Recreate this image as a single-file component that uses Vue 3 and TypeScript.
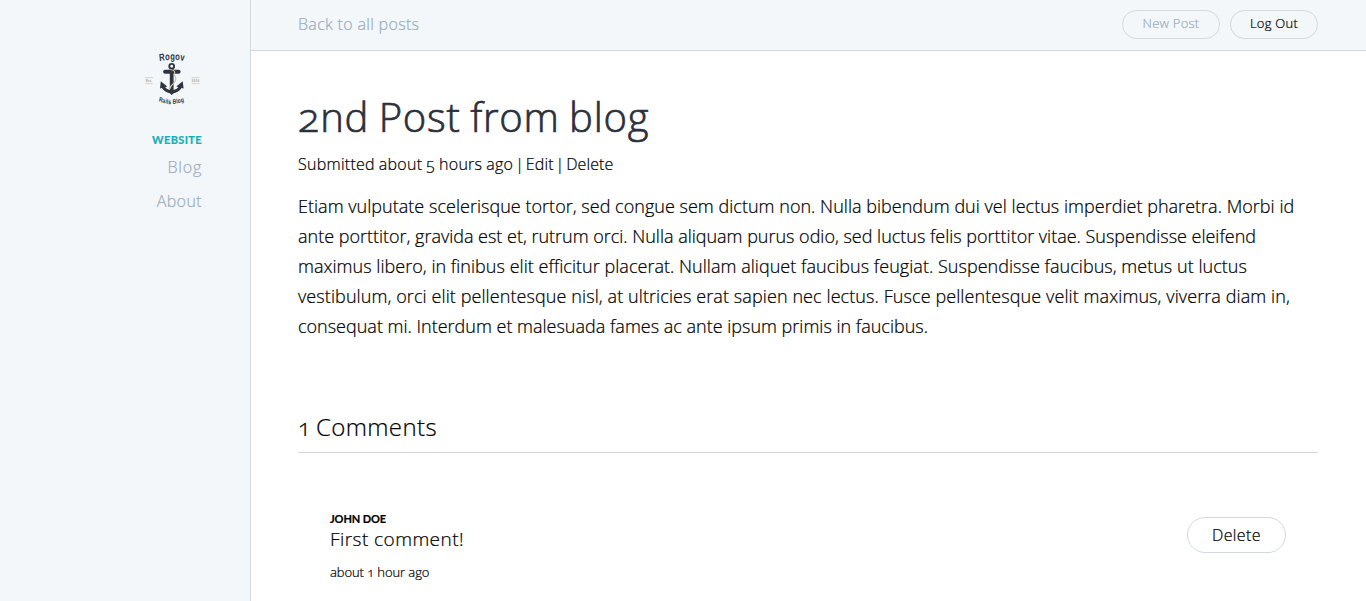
<script setup lang="ts">
interface Line { text: string; spacing: number }
interface Comment { author: string; body: string; age: string }

const body: Line[] = [
  { text: 'Etiam vulputate scelerisque tortor, sed congue sem dictum non. Nulla bibendum dui vel lectus imperdiet pharetra. Morbi id', spacing: 0.025 },
  { text: 'ante porttitor, gravida est et, rutrum orci. Nulla aliquam purus odio, sed luctus felis porttitor vitae. Suspendisse eleifend', spacing: -0.013 },
  { text: 'maximus libero, in finibus elit efficitur placerat. Nullam aliquet faucibus feugiat. Suspendisse faucibus, metus ut luctus', spacing: 0.031 },
  { text: 'vestibulum, orci elit pellentesque nisl, at ultricies erat sapien nec lectus. Fusce pellentesque velit maximus, viverra diam in,', spacing: 0.09 },
  { text: 'consequat mi. Interdum et malesuada fames ac ante ipsum primis in faucibus.', spacing: 0 },
]
const nav: string[] = ['Blog', 'About']
const comments: Comment[] = [{ author: 'John Doe', body: 'First comment!', age: 'about 1 hour ago' }]
</script>

<template>
  <div class="page">
    <aside class="sidebar">
      <svg class="logo" width="60" height="60" viewBox="0 0 60 60" role="img">
        <defs>
          <path id="arc-top" d="M15 10.4Q30 7 45 10.4" />
          <path id="arc-bottom" d="M14 38.4Q29.5 44.6 45 38.4" />
        </defs>
        <text class="brand" transform="scale(1 1.35)"><textPath href="#arc-top" startOffset="50%" text-anchor="middle">Rogov</textPath></text>
        <g fill="none" stroke="#303540">
          <circle cx="29.7" cy="18.3" r="2.4" stroke-width="1.9" />
          <path d="M29.7 21V44" stroke-width="3.8" />
          <path d="M23.1 23.8H36.6" stroke-width="4" stroke-linecap="round" />
          <path d="M20.3 37Q22.5 43.3 29.7 44Q37 43.3 39.2 37" stroke-width="3.2" />
        </g>
        <path d="M18 40.5L18.8 33.3L25.3 38.5ZM41.6 40.5L40.7 33.3L34.3 38.5ZM26.5 44H33L29.7 47Z" fill="#303540" />
        <path d="M28.2 21.5Q34.5 22.4 32 26.5Q35.5 31 32 35Q28.5 37.5 27.4 41.5" fill="none" stroke="#c9c4a5" stroke-width="1.1" />
        <path d="M3 29.6h8M3 35.6h8M49.5 29.6h8M49.5 35.6h8" stroke="#ccccbd" stroke-width=".8" />
        <text class="tiny" x="7" y="34" text-anchor="middle">Est.</text>
        <text class="tiny" x="53.5" y="34" text-anchor="middle">2016</text>
        <text class="brand small" transform="scale(1 1.35)"><textPath href="#arc-bottom" startOffset="50%" text-anchor="middle">Rails Blog</textPath></text>
      </svg>
      <h2 class="section">Website</h2>
      <nav class="links">
        <a v-for="item in nav" :key="item">{{ item }}</a>
      </nav>
    </aside>
    <div class="content">
      <header class="topbar">
        <a class="back">Back to all posts</a>
        <div class="actions">
          <a class="pill muted">New Post</a>
          <a class="pill logout">Log Out</a>
        </div>
      </header>
      <main class="post">
        <h1>2nd Post from blog</h1>
        <p class="meta"><span class="submitted">Submitted about 5 hours ago</span> | <a>Edit</a> | <a>Delete</a></p>
        <p class="body">
          <span v-for="line in body" :key="line.text" :style="{ letterSpacing: line.spacing + 'px' }">{{ line.text }}</span>
        </p>
        <h2 class="count">{{ comments.length }} Comments</h2>
        <article v-for="comment in comments" :key="comment.author" class="comment">
          <div>
            <h3>{{ comment.author }}</h3>
            <p class="text">{{ comment.body }}</p>
            <p class="age">{{ comment.age }}</p>
          </div>
          <a class="pill remove">Delete</a>
        </article>
      </main>
    </div>
  </div>
</template>

<style>
body { margin: 0; overflow: hidden; }
</style>

<style scoped>
.page {
  display: flex;
  height: 601px;
  overflow: hidden;
  background: #fff;
  color: #000;
  font: 300 16px/24px "Open Sans", "Noto Sans", sans-serif;
  font-feature-settings: "onum", "liga";
  -webkit-text-stroke: .22px currentColor;
}
h1, h2, h3, p { margin: 0; font-weight: 300; }
.sidebar {
  box-sizing: border-box;
  width: 251px;
  flex: none;
  padding: 48px 48px 0 0;
  border-right: 1px solid #d1d9dd;
  background: #f3f7fa;
  display: flex;
  flex-direction: column;
  align-items: flex-end;
}
.logo { display: block; -webkit-text-stroke: 0; }
.brand { font: 700 7.6px "Liberation Sans", sans-serif; letter-spacing: .3px; fill: #303540; }
.brand.small { font-size: 4.9px; letter-spacing: .2px; }
.tiny { font: 700 3.5px "Liberation Sans", sans-serif; fill: #aaa996; }
.section {
  margin-top: 22px;
  font: 700 11px/20px Lato, sans-serif;
  letter-spacing: .37px;
  text-transform: uppercase;
  color: #12b0b5;
}
.links { display: flex; flex-direction: column; align-items: flex-end; gap: 10px; margin-top: 5px; color: #9baebc; letter-spacing: .4px; }
.links a:first-child { letter-spacing: .8px; }
.content { flex: 1; min-width: 0; }
.topbar {
  display: flex;
  align-items: center;
  justify-content: space-between;
  box-sizing: border-box;
  height: 51px;
  padding: 0 48px 0 47px;
  border-bottom: 1px solid #cfdcde;
  background: #f3f7fa;
}
.back { margin-top: -2px; color: #9baebc; letter-spacing: .32px; }
.actions { display: flex; gap: 10px; margin-top: -1px; }
.pill {
  box-sizing: border-box;
  border: 1px solid #d1d9dd;
  border-radius: 18px;
  text-align: center;
}
.muted, .logout { width: 98px; height: 29px; font-size: 13px; line-height: 25px; letter-spacing: .25px; }
.muted { color: #9baebc; }
.logout { width: 88px; }
.post { padding: 41px 48px 0 47px; }
h1 { font-size: 40px; line-height: 50px; letter-spacing: .74px; word-spacing: -1.5px; color: #2b303b; -webkit-text-stroke-width: .7px; }
.meta { margin-top: 10px; letter-spacing: .12px; word-spacing: -2.4px; }
.submitted { letter-spacing: .27px; word-spacing: -.5px; }
.body { margin-top: 15px; font-size: 18px; line-height: 30px; }
.body span { display: block; white-space: nowrap; }
.count {
  margin-top: 69px;
  padding-bottom: 8px;
  border-bottom: 1px solid #d1d9dd;
  font-size: 24px;
  line-height: 34px;
  letter-spacing: .4px;
  word-spacing: -2px;
}
.comment { display: flex; justify-content: space-between; padding: 56px 32px 0; }
h3 { font: 700 11px/20px Lato, sans-serif; letter-spacing: -.1px; text-transform: uppercase; }
.text { font-size: 19px; line-height: 20px; letter-spacing: .45px; }
.age { margin-top: 13px; font-size: 13px; line-height: 20px; letter-spacing: -.08px; }
.remove { width: 99px; height: 36px; margin-top: 8px; line-height: 34px; letter-spacing: .4px; }
</style>
